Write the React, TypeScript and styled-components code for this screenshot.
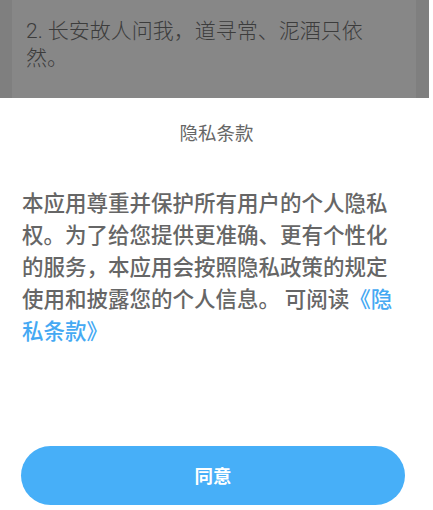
import { createGlobalStyle, styled } from 'styled-components'

const GlobalStyle = createGlobalStyle`
  html, body {
    margin: 0;
    padding: 0;
    background: #fff;
  }
  body {
    font-family: "Noto Sans CJK SC", "Noto Sans", sans-serif;
  }
`

export default function App() {
  const texts = {
    behind: '2. 长安故人问我，道寻常、泥酒只依然。',
    title: '隐私条款',
    body: '本应用尊重并保护所有用户的个人隐私权。为了给您提供更准确、更有个性化的服务，本应用会按照隐私政策的规定使用和披露您的个人信息。 可阅读',
    link: '《隐私条款》',
    agree: '同意'
  }
  return (
    <>
      <GlobalStyle />
      <Page>
        <Backdrop>
          <BehindCard>
            <BehindText>{texts.behind}</BehindText>
          </BehindCard>
        </Backdrop>
        <Sheet>
          <Title>{texts.title}</Title>
          <Content>
            {texts.body}
            <Link>{texts.link}</Link>
          </Content>
          <AgreeButton>{texts.agree}</AgreeButton>
        </Sheet>
      </Page>
    </>
  )
}

const Page = styled.div`
  width: 433px;
  height: 510px;
  display: flex;
  flex-direction: column;
  overflow: hidden;
`

const Backdrop = styled.div`
  height: 98px;
  margin-right: 4px;
  padding: 0 13px 0 12px;
  background-color: #7f7f7f;
  display: flex;
`

const BehindCard = styled.div`
  flex: 1;
  background-color: #878787;
  padding: 18px 0 0 14px;
`

const BehindText = styled.div`
  width: 356px;
  font-family: Roboto, "Noto Sans CJK SC", sans-serif;
  font-size: 21px;
  font-weight: 300;
  line-height: 27px;
  color: #3c3c3c;
`

const Sheet = styled.div`
  flex: 1;
  display: flex;
  flex-direction: column;
  background-color: #fff;
`

const Title = styled.div`
  margin-top: 21px;
  text-align: center;
  font-size: 18.5px;
  line-height: 26px;
  color: #666;
`

const Content = styled.div`
  margin: 41px 0 0 22px;
  width: 380px;
  font-size: 21.5px;
  line-height: 32px;
  font-weight: 500;
  color: #666;
`

const Link = styled.span`
  color: #45a9f3;
`

const AgreeButton = styled.button`
  all: unset;
  cursor: pointer;
  margin: auto 0 5px 21px;
  width: 384px;
  height: 59px;
  border-radius: 30px;
  background-color: #47aff8;
  color: #fff;
  font-size: 18.5px;
  font-weight: 700;
  text-align: center;
  line-height: 59px;
`
